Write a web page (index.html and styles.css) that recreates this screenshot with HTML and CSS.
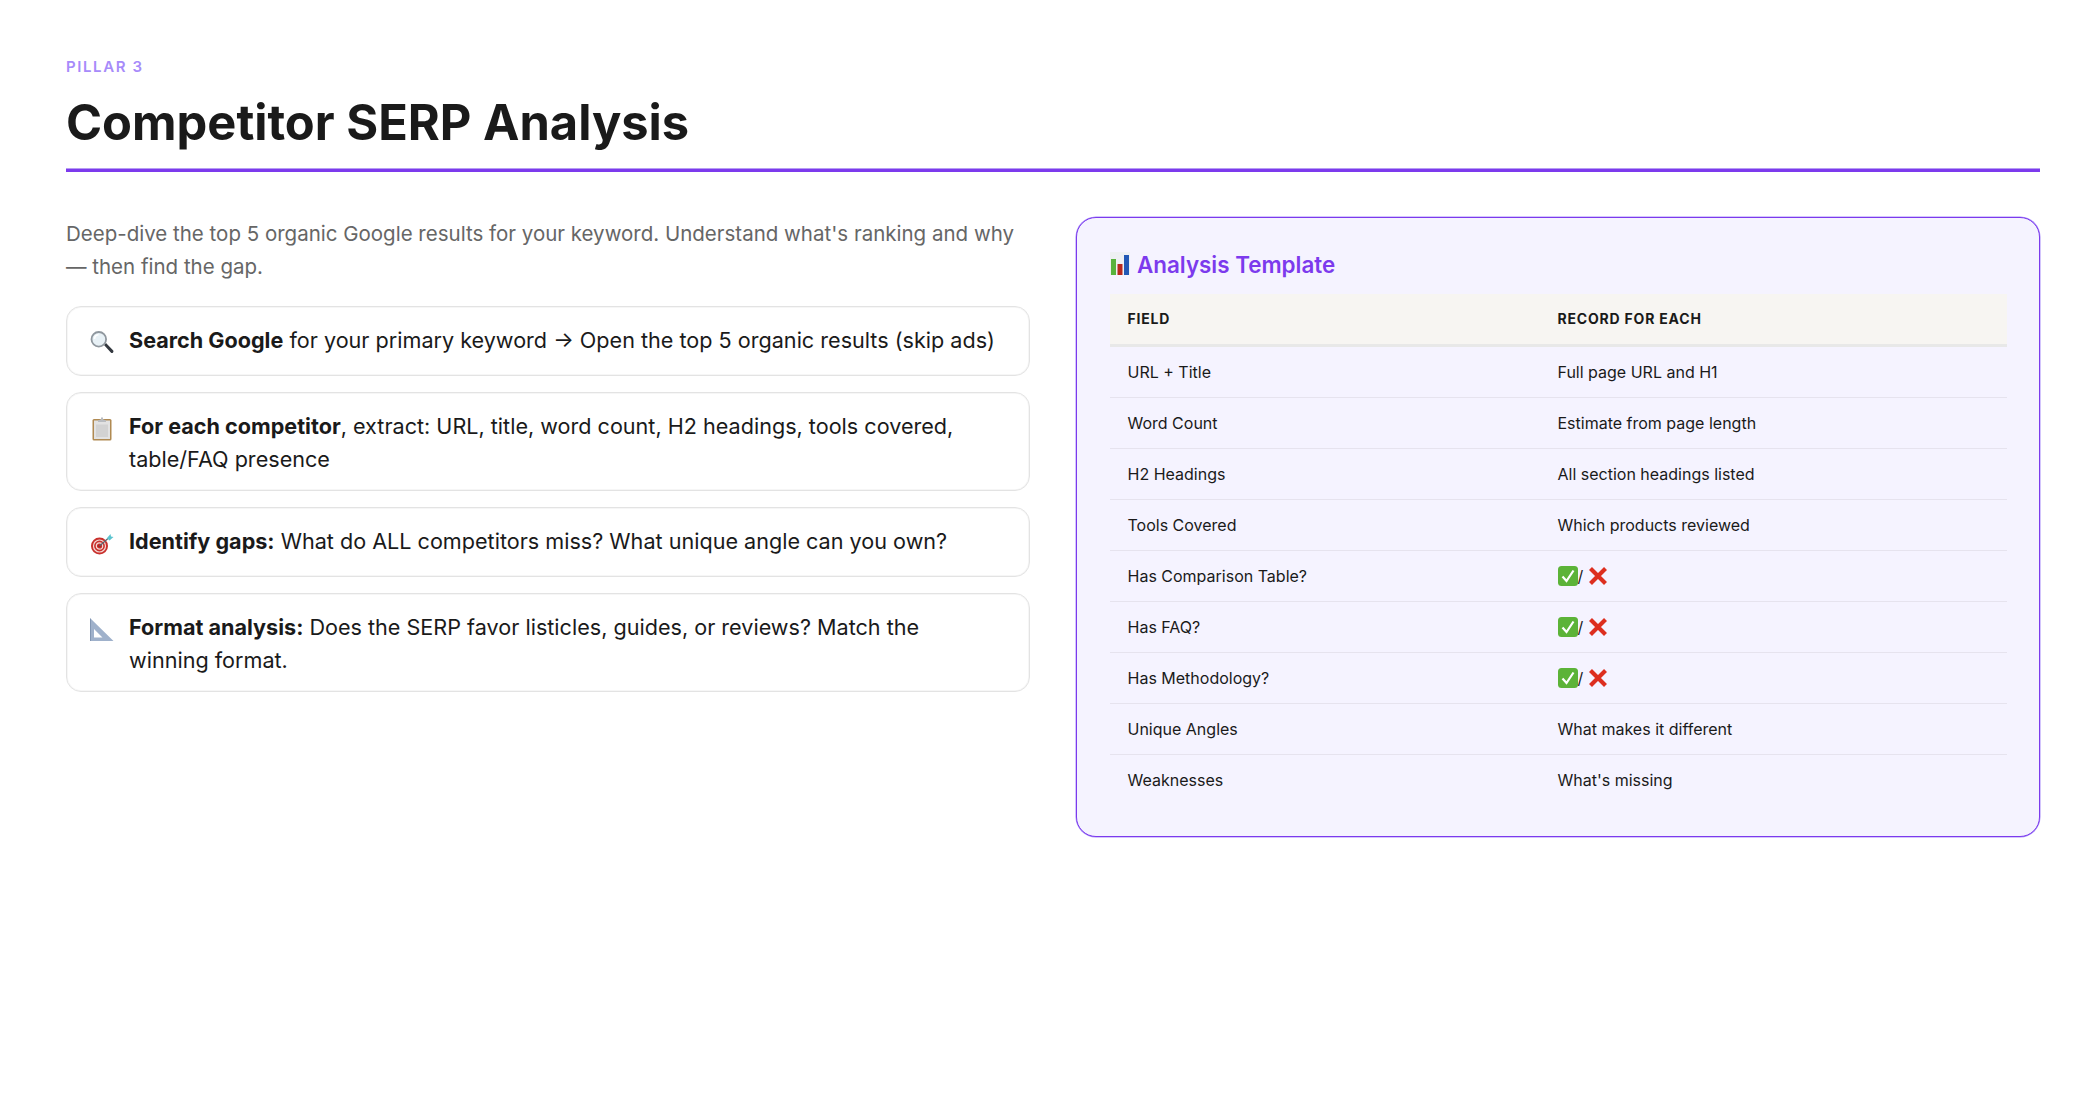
FILE: index.html
```html
<!DOCTYPE html>
<html lang="en">
<head>
<meta charset="utf-8">
<title>Competitor SERP Analysis</title>
<link rel="stylesheet" href="styles.css">
</head>
<body>
<svg class="sprite" aria-hidden="true">
  <symbol id="i-search" viewBox="0 0 24 24">
    <path d="M14 14.5l2-2 7 7.2c.7.8.5 1.6 0 2.2s-1.500.8-2.200 0z" fill="#33383f"/>
    <circle cx="8.800" cy="8.800" r="7.300" fill="#e8f1f6" stroke="#8f979e" stroke-width="1.800"/>
    <path d="M4.500 8.500a4.500 4.500 0 0 1 4-4.300" fill="none" stroke="#fff" stroke-width="1.500"/>
  </symbol>
  <symbol id="i-clip" viewBox="0 0 24 24">
    <rect x="2.500" y="2.500" width="19" height="21.500" rx="1.500" fill="#b08a52"/>
    <rect x="4" y="4" width="16" height="18.500" fill="#e2e2e2"/>
    <rect x="6" y="8" width="12" height="12.500" fill="#d2d2d2"/>
    <path d="M8 4l3-1.200V1h2v1.800L16 4v1.500H8z" fill="#b9bcc0"/>
  </symbol>
  <symbol id="i-dart" viewBox="0 0 24 24">
    <circle cx="9.500" cy="14.500" r="8.500" fill="#c9302c"/>
    <circle cx="9.500" cy="14.500" r="6" fill="none" stroke="#f3d9d6" stroke-width="1.200"/>
    <circle cx="9.500" cy="14.500" r="3.200" fill="none" stroke="#f3d9d6" stroke-width="1.200"/>
    <circle cx="9.500" cy="14.500" r="1.300" fill="#a81f1f"/>
    <path d="M9.500 14.500L18 7" stroke="#5b6770" stroke-width="1.200"/>
    <path d="M17 6.500l3.500-4 .5 2.500 2.500.5-4 3.500z" fill="#5cc4cf"/>
  </symbol>
  <symbol id="i-tri" viewBox="0 0 24 24">
    <path fill-rule="evenodd" d="M.5 1L23.500 23.500H.5zM4 11.500V20h8.500z" fill="#9fb1cb"/>
    <path d="M.5 1v22.500" stroke="#8195b2" stroke-width="1"/>
  </symbol>
  <symbol id="i-chart" viewBox="0 0 20 23">
    <rect x="0" y="0" width="20" height="23" fill="#eef0f3"/>
    <rect x="1" y="7" width="5" height="16" fill="#58b23c"/>
    <rect x="7.500" y="12" width="5" height="11" fill="#b8281e"/>
    <rect x="14" y="3" width="5" height="20" fill="#2258b5"/>
  </symbol>
  <symbol id="i-check" viewBox="0 0 20 20">
    <rect width="20" height="20" rx="3.500" fill="#5cb338"/>
    <path d="M4.500 10.500l4 4.500 7-10.500" fill="none" stroke="#fff" stroke-width="2.200"/>
  </symbol>
  <symbol id="i-cross" viewBox="0 0 20 20">
    <path d="M2.500 2.500l15 15M17.500 2.500l-15 15" stroke="#dd2e1f" stroke-width="4.200"/>
  </symbol>
</svg>
<main class="slide">
  <header class="head">
    <div class="eyebrow">PILLAR 3</div>
    <h1 class="title">Competitor SERP Analysis</h1>
  </header>
  <div class="columns">
    <section class="left">
      <p class="lead">Deep-dive the top 5 organic Google results for your keyword. Understand what's ranking and why — then find the gap.</p>
      <ul class="steps">
        <li class="step"><svg class="ico"><use href="#i-search"/></svg><span><strong>Search Google</strong> for your primary keyword → Open the top 5 organic results (skip ads)</span></li>
        <li class="step"><svg class="ico"><use href="#i-clip"/></svg><span><strong>For each competitor</strong>, extract: URL, title, word count, H2 headings, tools covered, table/FAQ presence</span></li>
        <li class="step"><svg class="ico"><use href="#i-dart"/></svg><span><strong>Identify gaps:</strong> What do ALL competitors miss? What unique angle can you own?</span></li>
        <li class="step"><svg class="ico"><use href="#i-tri"/></svg><span><strong>Format analysis:</strong> Does the SERP favor listicles, guides, or reviews? Match the winning format.</span></li>
      </ul>
    </section>
    <section class="card">
      <h2 class="card-title"><svg class="chart"><use href="#i-chart"/></svg>Analysis Template</h2>
      <table class="tbl">
        <thead><tr><th class="col-a">FIELD</th><th>RECORD FOR EACH</th></tr></thead>
        <tbody>
          <tr><td>URL + Title</td><td>Full page URL and H1</td></tr>
          <tr><td>Word Count</td><td>Estimate from page length</td></tr>
          <tr><td>H2 Headings</td><td>All section headings listed</td></tr>
          <tr><td>Tools Covered</td><td>Which products reviewed</td></tr>
          <tr><td>Has Comparison Table?</td><td class="marks"><svg class="mark"><use href="#i-check"/></svg>/<svg class="mark x"><use href="#i-cross"/></svg></td></tr>
          <tr><td>Has FAQ?</td><td class="marks"><svg class="mark"><use href="#i-check"/></svg>/<svg class="mark x"><use href="#i-cross"/></svg></td></tr>
          <tr><td>Has Methodology?</td><td class="marks"><svg class="mark"><use href="#i-check"/></svg>/<svg class="mark x"><use href="#i-cross"/></svg></td></tr>
          <tr><td>Unique Angles</td><td>What makes it different</td></tr>
          <tr><td>Weaknesses</td><td>What's missing</td></tr>
        </tbody>
      </table>
    </section>
  </div>
</main>
</body>
</html>
```
FILE: styles.css
```css
* { box-sizing: border-box; }
html, body { margin: 0; padding: 0; background: #fff; }
body { font-family: Inter, "Noto Sans", sans-serif; color: #1a1a1a; }
.sprite { display: none; }
.slide { width: 2082px; height: 1116px; padding: 56px 42px 0 66px; }
.head { border-bottom: 3px solid #7c3aed; box-shadow: inset 0 -1px 0 #b79cf3; padding-bottom: 16px; margin-bottom: 45px; }
.eyebrow { font-size: 15px; font-weight: 600; letter-spacing: 1.6px; color: #a78bfa; line-height: 22px; margin-bottom: 15px; }
.title { margin: 0; font-family: Inter, sans-serif; font-size: 48.8px; font-weight: 700; line-height: 60px; }
.columns { display: grid; grid-template-columns: 1fr 1fr; gap: 46px; align-items: start; }
.lead { margin: 0 0 23px; font-size: 20.5px; line-height: 33px; color: #666; }
.steps { list-style: none; margin: 0; padding: 0; display: flex; flex-direction: column; gap: 16px; }
.step { display: flex; gap: 15px; background: #fff; border: 1px solid #e3e3e3; box-shadow: inset 0 0 0 1px #f6f6f6; border-radius: 15px; padding: 16.5px 28px 14.5px 23px; font-size: 21.6px; line-height: 33px; }
.ico { flex: none; width: 24px; height: 37px; }
.card { background: #f5f3ff; border: 1px solid #7c3aed; box-shadow: 0 0 0 .5px #a78bfa; border-radius: 20px; padding: 29px 32px 30px 33px; }
.card-title { display: flex; align-items: center; gap: 7px; margin: 0 0 11px; font-size: 22.4px; font-weight: 600; line-height: 36px; color: #7c3aed; }
.chart { width: 20px; height: 23px; margin-bottom: 3px; }
.tbl { width: 100%; border-collapse: collapse; table-layout: fixed; font-size: 16px; }
.col-a { width: 430px; }
.tbl th { background: #f7f5f2; text-align: left; font-size: 14px; font-weight: 700; letter-spacing: .8px; padding: 15px 17.5px; border-bottom: 3px solid #e8e8e8; line-height: 20px; }
.tbl td { padding: 14px 17.5px; border-bottom: 1px solid #e6e3ee; line-height: 22px; height: 51px; }
.tbl tr:last-child td { border-bottom: 0; }
.mark { width: 20px; height: 20px; vertical-align: -4px; }
.mark.x { margin-left: 5px; }
```
